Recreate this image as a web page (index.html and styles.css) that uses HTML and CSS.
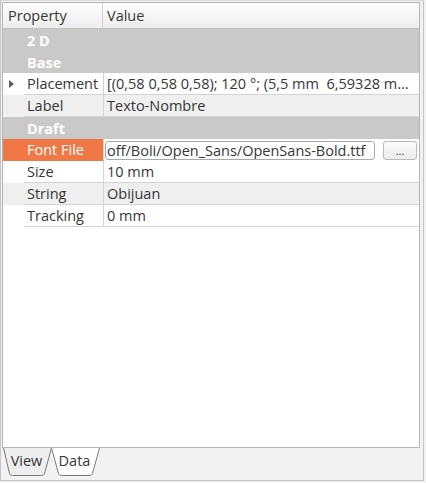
FILE: index.html
```html
<!DOCTYPE html>
<html>
<head>
<meta charset="utf-8">
<link rel="stylesheet" href="styles.css">
</head>
<body>
<div class="window">
  <div class="tree">
    <div class="header">
      <div class="hcell hprop">Property</div>
      <div class="hcell hval">Value</div>
    </div>
    <div class="row group"><span class="gname">2 D</span></div>
    <div class="row group"><span class="gname">Base</span></div>
    <div class="row">
      <div class="indent"><span class="arrow"></span></div>
      <div class="pname">Placement</div>
      <div class="vcell">[(0,58 0,58 0,58); 120 °; (5,5 mm&nbsp; 6,59328 m…</div>
    </div>
    <div class="row alt">
      <div class="indent"></div>
      <div class="pname">Label</div>
      <div class="vcell">Texto-Nombre</div>
    </div>
    <div class="row group"><span class="gname">Draft</span></div>
    <div class="row">
      <div class="indent sel"></div>
      <div class="pname sel">Font File</div>
      <div class="vcell editcell">
        <div class="edit">off/Boli/Open_Sans/OpenSans-Bold.ttf</div>
        <div class="btn">...</div>
      </div>
    </div>
    <div class="row">
      <div class="indent"></div>
      <div class="pname">Size</div>
      <div class="vcell">10 mm</div>
    </div>
    <div class="row alt">
      <div class="indent"></div>
      <div class="pname">String</div>
      <div class="vcell">Obijuan</div>
    </div>
    <div class="row">
      <div class="indent"></div>
      <div class="pname">Tracking</div>
      <div class="vcell">0 mm</div>
    </div>
  </div>
  <div class="tabs">
    <div class="tab">
      <svg class="tabshape" width="49" height="29" viewBox="0 0 49 29">
        <path d="M0.5 0 L6.5 25.5 Q7.2 27.5 9.5 27.5 L38.5 27.5 Q40.8 27.5 41.5 25.5 L48.5 0" fill="#eeeeee" stroke="#7a7a7a" stroke-width="1"/>
      </svg>
      <span class="tablabel">View</span>
    </div>
    <div class="tab">
      <svg class="tabshape" width="49" height="29" viewBox="0 0 49 29">
        <path d="M0.5 0 L7.5 25.5 Q8.2 27.5 10.5 27.5 L38.5 27.5 Q40.8 27.5 41.5 25.5 L48.5 0" fill="#ffffff" stroke="#7a7a7a" stroke-width="1"/>
      </svg>
      <span class="tablabel">Data</span>
    </div>
  </div>
</div>
</body>
</html>
```

FILE: styles.css
```css
html, body {
  margin: 0;
  padding: 0;
  background: #f2f2f2;
}

body {
  font-family: "Open Sans", "DejaVu Sans", sans-serif;
  font-size: 14.5px;
  color: #363636;
}

.window {
  box-sizing: border-box;
  width: 424px;
  height: 481px;
  border: 1px solid #c4c4c4;
  border-top-color: #dadada;
  padding: 1px 3px 0 1px;
  display: flex;
  flex-direction: column;
}

.tree {
  box-sizing: border-box;
  height: 446px;
  background: #ffffff;
  border: 1px solid #b4b4b4;
  flex: none;
}

.header {
  display: flex;
  height: 25px;
  border-bottom: 1px solid #c2c2c2;
  background: linear-gradient(#fefefe, #ededed);
}

.hcell {
  display: flex;
  align-items: center;
  padding-left: 5px;
}

.hprop {
  width: 94px;
  border-right: 1px solid #d0d0d0;
}

.hval {
  flex: 1;
  padding-left: 4px;
}

.row {
  display: flex;
  height: 22px;
  box-sizing: border-box;
}

.row.alt {
  background: #efefef;
}

.row.group {
  background: #cac9c8;
  align-items: center;
  padding-left: 24px;
}

.gname {
  color: #ffffff;
  font-weight: bold;
}

.indent {
  width: 21px;
  flex: none;
  display: flex;
  align-items: center;
  justify-content: center;
  padding-right: 1px;
  box-sizing: border-box;
}

.arrow {
  width: 0;
  height: 0;
  border-top: 4px solid transparent;
  border-bottom: 4px solid transparent;
  border-left: 5px solid #5e5e5e;
  margin-right: 4px;
}

.pname {
  box-sizing: border-box;
  width: 80px;
  flex: none;
  padding-left: 3px;
  display: flex;
  align-items: center;
  border-right: 1px solid #d4d4d4;
  border-bottom: 1px solid #d4d4d4;
  white-space: nowrap;
}

.sel {
  background: #f07746;
  color: #ffffff;
  border-bottom-color: #f07746;
}

.vcell {
  flex: 1;
  box-sizing: border-box;
  padding-left: 3px;
  display: flex;
  align-items: center;
  border-bottom: 1px solid #d4d4d4;
  white-space: pre;
  overflow: hidden;
}

.editcell {
  padding-left: 1px;
  gap: 8px;
  border-bottom: none;
}

.edit {
  box-sizing: border-box;
  width: 270px;
  height: 19px;
  border: 1px solid #a9a9a9;
  border-radius: 3px;
  background: #fff;
  padding-left: 1px;
  display: flex;
  align-items: center;
  overflow: hidden;
  white-space: nowrap;
}

.btn {
  box-sizing: border-box;
  width: 34px;
  height: 19px;
  border: 1px solid #b9b9b9;
  border-radius: 3px;
  background: linear-gradient(#fbfbfb, #ececec);
  display: flex;
  align-items: center;
  justify-content: center;
  font-size: 11px;
  padding-top: 1px;
}

.tabs {
  display: flex;
  padding-left: 1px;
  height: 29px;
}

.tab {
  display: grid;
  width: 48px;
  height: 29px;
}

.tabshape {
  grid-area: 1 / 1;
}

.tablabel {
  grid-area: 1 / 1;
  justify-self: center;
  align-self: start;
  margin-top: 4px;
  padding-right: 2px;
  line-height: 18px;
}
```
